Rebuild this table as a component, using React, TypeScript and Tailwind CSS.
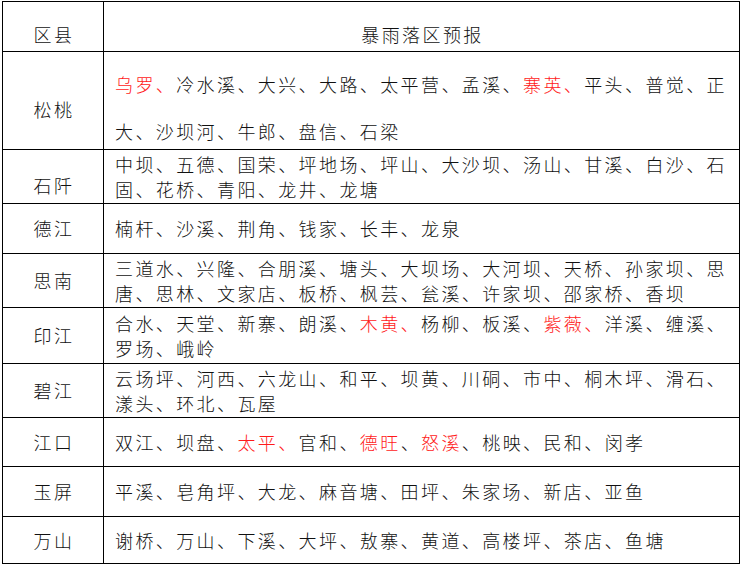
type Row = {
  name: string;
  h: string;
  labelPad?: string;
  lines: string[];
  tall?: boolean;
};

const rows: Row[] = [
  {
    name: "松桃",
    h: "h-[98px]",
    labelPad: "pt-[18px]",
    tall: true,
    lines: ["{乌罗、}冷水溪、大兴、大路、太平营、孟溪、{寨英、}平头、普觉、正", "大、沙坝河、牛郎、盘信、石梁"],
  },
  {
    name: "石阡",
    h: "h-[54px]",
    labelPad: "pt-[18px]",
    lines: ["中坝、五德、国荣、坪地场、坪山、大沙坝、汤山、甘溪、白沙、石", "固、花桥、青阳、龙井、龙塘"],
  },
  { name: "德江", h: "h-[50px]", lines: ["楠杆、沙溪、荆角、钱家、长丰、龙泉"] },
  {
    name: "思南",
    h: "h-[54px]",
    lines: ["三道水、兴隆、合朋溪、塘头、大坝场、大河坝、天桥、孙家坝、思", "唐、思林、文家店、板桥、枫芸、瓮溪、许家坝、邵家桥、香坝"],
  },
  {
    name: "印江",
    h: "h-[56px]",
    lines: ["合水、天堂、新寨、朗溪、{木黄、}杨柳、板溪、{紫薇、}洋溪、缠溪、", "罗场、峨岭"],
  },
  {
    name: "碧江",
    h: "h-[54px]",
    lines: ["云场坪、河西、六龙山、和平、坝黄、川硐、市中、桐木坪、滑石、", "漾头、环北、瓦屋"],
  },
  { name: "江口", h: "h-[49px]", lines: ["双江、坝盘、{太平、}官和、{德旺}、{怒溪}、桃映、民和、闵孝"] },
  { name: "玉屏", h: "h-[50px]", lines: ["平溪、皂角坪、大龙、麻音塘、田坪、朱家场、新店、亚鱼"] },
  { name: "万山", h: "h-[46px]", lines: ["谢桥、万山、下溪、大坪、敖寨、黄道、高楼坪、茶店、鱼塘"] },
];

// "{...}" marks the towns printed in red
const Line = ({ text }: { text: string }) => (
  <div className="whitespace-nowrap leading-[25px]">
    {text.split(/(\{[^}]*\})/).map((part, i) =>
      part.startsWith("{") ? (
        <span key={i} className="text-[#ff1a1a]">
          {part.slice(1, -1)}
        </span>
      ) : (
        <span key={i}>{part}</span>
      )
    )}
  </div>
);

export default function App() {
  return (
    <div className="min-h-screen bg-white pt-[1px] pl-[2px]">
      <div
        className="w-[738px] border border-black text-[18px] font-light tracking-[2.4px] text-[#111111]"
        style={{ fontFamily: '"Noto Sans CJK SC", "Noto Sans", sans-serif' }}
      >
        <div className="flex h-[50px] border-b border-black">
          <div className="flex w-[101px] shrink-0 items-center justify-center border-r border-black pt-[16px] pl-[2px] leading-[25px]">
            区县
          </div>
          <div className="flex flex-1 items-center justify-center pt-[16px] pl-[2px] leading-[25px]">暴雨落区预报</div>
        </div>
        {rows.map((r, idx) => (
          <div key={r.name} className={`flex ${r.h} ${idx < rows.length - 1 ? "border-b border-black" : ""}`}>
            <div
              className={`flex w-[101px] shrink-0 items-center justify-center border-r border-black pl-[2px] leading-[25px] ${r.labelPad ?? ""}`}
            >
              {r.name}
            </div>
            {r.tall ? (
              <div className="flex flex-1 flex-col gap-[22px] pt-[20px] pl-[11px]">
                {r.lines.map((l) => (
                  <Line key={l} text={l} />
                ))}
              </div>
            ) : (
              <div className="flex flex-1 flex-col justify-center pl-[11px]">
                {r.lines.map((l) => (
                  <Line key={l} text={l} />
                ))}
              </div>
            )}
          </div>
        ))}
      </div>
    </div>
  );
}
